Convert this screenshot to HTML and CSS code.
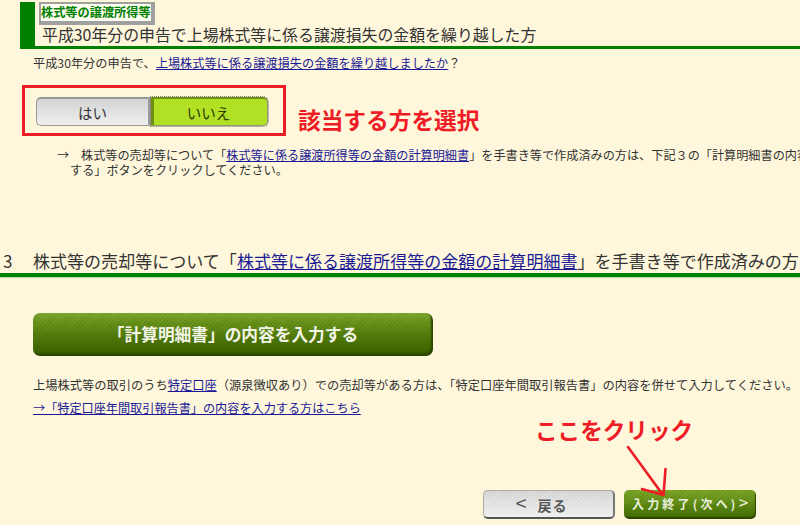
FILE: index.html
```html
<!DOCTYPE html>
<html lang="ja">
<head>
<meta charset="utf-8">
<title>株式等の譲渡所得等</title>
<link rel="stylesheet" href="styles.css">
</head>
<body>
<div class="page">
  <header class="head">
    <div class="tag">株式等の譲渡所得等</div>
    <h1 class="head-title">平成30年分の申告で上場株式等に係る譲渡損失の金額を繰り越した方</h1>
  </header>
  <p class="question">平成30年分の申告で、<a href="#">上場株式等に係る譲渡損失の金額を繰り越しましたか</a>？</p>
  <div class="choice-row">
    <div class="choice-box">
      <div class="toggle">
        <div class="opt opt-yes">はい</div>
        <div class="opt opt-no">いいえ</div>
      </div>
    </div>
    <div class="note-select">該当する方を選択</div>
  </div>
  <div class="notice">
    <p class="notice-l1"><span class="arrow-mark">→</span>株式等の売却等について「<a href="#">株式等に係る譲渡所得等の金額の計算明細書</a>」を手書き等で作成済みの方は、下記３の「計算明細書の内容を入力</p>
    <p class="notice-l2">する」ボタンをクリックしてください。</p>
  </div>
  <h2 class="sec-title"><span class="sec-num">3</span>株式等の売却等について「<a href="#">株式等に係る譲渡所得等の金額の計算明細書</a>」を手書き等で作成済みの方</h2>
  <div class="sec-body">
    <div class="big-btn">「計算明細書」の内容を入力する</div>
    <p class="info">上場株式等の取引のうち<a href="#">特定口座</a>（源泉徴収あり）での売却等がある方は、「特定口座年間取引報告書」の内容を併せて入力してください。</p>
    <p class="info-link"><a href="#">→「特定口座年間取引報告書」の内容を入力する方はこちら</a></p>
  </div>
  <div class="click-note">ここをクリック</div>
  <div class="footer">
    <div class="nav-btn nav-back"><span class="chev">&lt;</span>戻る</div>
    <div class="nav-btn nav-next">入力終了(次へ)<span class="chev-next">&gt;</span></div>
  </div>
  <svg class="pointer" width="800" height="525" viewBox="0 0 800 525" aria-hidden="true">
    <path d="M628 447 L663 495 M665.500 469 L663.500 495 L642 489" fill="none" stroke="#ee1c25" stroke-width="2.600" stroke-linecap="round" stroke-linejoin="round"/>
  </svg>
</div>
</body>
</html>
```
FILE: styles.css
```css
* { box-sizing: border-box; }
html, body { margin: 0; padding: 0; }
body {
  background: #fff7dc;
  color: #333;
  font-family: "Noto Sans CJK JP", "Noto Sans", sans-serif;
  overflow: hidden;
}
a { color: #1a1a96; text-decoration: underline; }
p, h1, h2 { margin: 0; font-weight: 400; }
.page {
  position: relative;
  width: 800px;
  height: 525px;
  overflow: hidden;
  white-space: nowrap;
}
.head {
  margin: 3px 0 0 20px;
  height: 47px;
  border-left: 15px solid #008000;
  border-bottom: 3px solid #008000;
  padding-left: 4px;
}
.tag {
  width: 116px;
  height: 23px;
  margin-top: -1px;
  background: #fdfdf0;
  border-style: solid;
  border-color: #a0a0a0;
  border-width: 2px 4px 4px 2px;
  color: #008000;
  font-size: 12.200px;
  font-weight: 700;
  line-height: 17px;
  overflow: hidden;
}
.head-title {
  font-size: 15.900px;
  line-height: 21px;
  margin: -1px 0 0 3px;
  color: #333;
}
.question {
  font-size: 12.200px;
  line-height: 18px;
  margin: 5px 0 0 33px;
}
.choice-row {
  display: flex;
  margin: 13px 0 0 22px;
  align-items: flex-end;
}
.choice-box {
  width: 264px;
  height: 51px;
  border: 3px solid #ee1c25;
  padding: 8px 0 0 11px;
}
.toggle { display: flex; width: 232px; height: 30px; }
.opt {
  display: flex;
  align-items: center;
  justify-content: center;
  font-size: 14.500px;
  height: 29px;
  margin-top: 1px;
}
.opt-yes {
  width: 115px;
  background: linear-gradient(#d4d4d4, #efefef);
  border: 1px solid #999;
  border-right: 3px solid #9a9a9a;
  border-top-width: 2px;
  border-radius: 5px 0 0 5px;
}
.opt-no {
  width: 117px;
  padding-right: 4px;
  background: #b2e024;
  border-top: 2px solid #6f8f10;
  border-left: 3px solid #6f8f10;
  border-right: 1px solid #8d9a6a;
  border-bottom: 1px solid #8d9a6a;
  border-radius: 0 5px 5px 0;
  outline: 1px dotted #777;
  color: #2c3a00;
}
.note-select {
  margin: 0 0 2px 12px;
  color: #ee1c25;
  font-size: 22.700px;
  font-weight: 700;
  line-height: 29px;
}
.notice { font-size: 12.150px; line-height: 15px; margin-top: 11px; }
.notice-l1 { margin-left: 57px; }
.notice-l2 { margin-left: 70px; }
.arrow-mark { display: inline-block; width: 24px; }
.sec-title {
  margin-top: 66px;
  height: 34px;
  padding: 7px 0 0 3px;
  border-bottom: 4px solid #008000;
  box-shadow: 0 1px 0 #bfe0a0;
  font-size: 17.050px;
  line-height: 22px;
  overflow: hidden;
}
.sec-num { display: inline-block; width: 30px; }
.sec-body { padding: 36px 0 0 33px; }
.big-btn {
  width: 400px;
  height: 43px;
  border-radius: 7px;
  background:
    repeating-linear-gradient(135deg, rgba(255,255,255,.07) 0 1px, transparent 1px 3px) top / 100% 45% no-repeat,
    linear-gradient(#7ba22c, #5f8a12 25%, #3f6600 85%, #345500);
  box-shadow: inset -2px -2px 2px #2a4300;
  color: #f2f5e8;
  font-size: 16.700px;
  font-weight: 700;
  line-height: 43px;
  text-align: center;
}
.info { font-size: 12.250px; line-height: 18px; margin-top: 20px; }
.info-link { font-size: 12.150px; line-height: 18px; margin-top: 5px; }
.click-note {
  color: #ee1c25;
  font-size: 22.600px;
  font-weight: 700;
  line-height: 30px;
  margin: -2px 0 0 535px;
}
.footer { display: flex; gap: 9px; margin: 45px 0 0 483px; }
.nav-btn {
  width: 132px;
  height: 29px;
  border-radius: 5px;
  font-weight: 700;
  line-height: 28px;
  text-align: center;
}
.nav-back {
  padding-right: 14px;
  background:
    repeating-linear-gradient(135deg, rgba(255,255,255,.25) 0 1px, transparent 1px 3px) top / 100% 50% no-repeat,
    linear-gradient(#d2d2d2, #f0f0f0);
  border: 1px solid #aaa;
  border-bottom: 2px solid #555;
  border-right: 2px solid #777;
  color: #555;
  font-size: 14px;
  letter-spacing: 1px;
}
.chev { font-size: 20px; font-weight: 400; margin-right: 10px; line-height: 1; }
.nav-next {
  background:
    repeating-linear-gradient(135deg, rgba(255,255,255,.08) 0 1px, transparent 1px 3px) top / 100% 50% no-repeat,
    linear-gradient(#74a020, #3f6b00);
  box-shadow: inset -1px -2px 1px #2a4300;
  color: #e9efdc;
  font-size: 12px;
  letter-spacing: 3.200px;
}
.chev-next { font-size: 17px; font-weight: 400; letter-spacing: 0; line-height: 1; }
.pointer { position: absolute; left: 0; top: 0; pointer-events: none; }
```
